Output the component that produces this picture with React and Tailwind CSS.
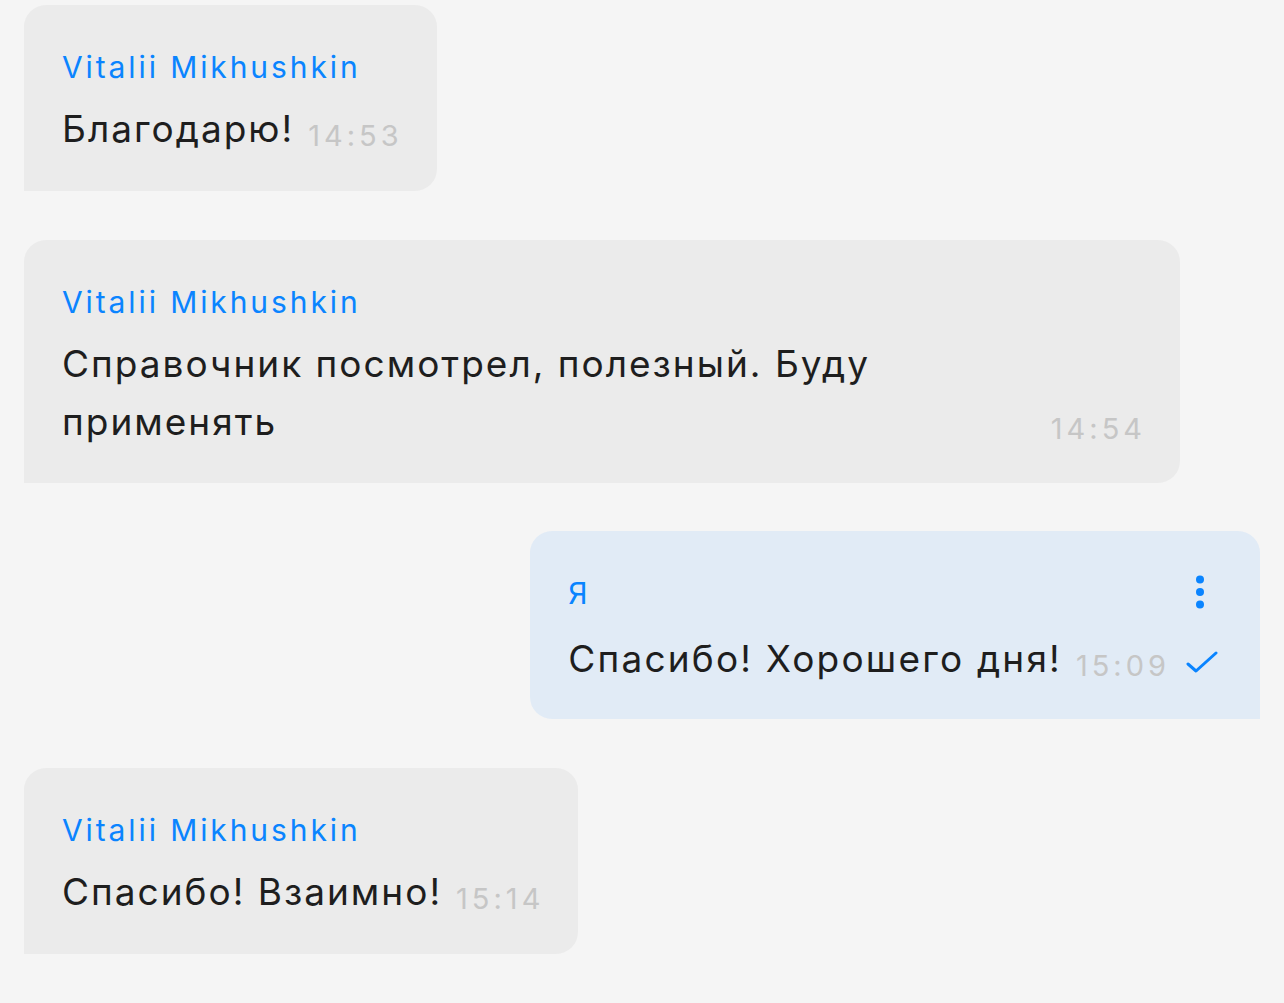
const incoming = [
  { id: 1, name: 'Vitalii Mikhushkin', text: 'Благодарю!', time: '14:53' },
]

function Incoming({ name, time, children, wide }) {
  return (
    <div
      className={`bg-[#ebebeb] rounded-[22px] rounded-bl-none pl-[38px] pr-[38px] pt-[44px] ${
        wide ? 'w-[1156px] pb-[32px]' : 'w-fit pb-[33px]'
      }`}
    >
      <div className="text-[30px] leading-[36px] text-[#0a84ff] tracking-[2.9px]">{name}</div>
      <div className={`mt-[15px] flex items-end gap-[14px] ${wide ? 'justify-between' : ''}`}>
        <div className="text-[37px] leading-[58px] text-[#1e1e1e] tracking-[2px] max-w-[900px]">
          {children}
        </div>
        <span className="text-[29px] leading-[58px] text-[#c6c6c6] tracking-[4px] -mr-[4px] translate-y-[7px] shrink-0">
          {time}
        </span>
      </div>
    </div>
  )
}

export default function App() {
  return (
    <div
      className="min-h-screen bg-[#f5f5f5] px-[24px] pt-[5px] flex flex-col gap-[49px]"
      style={{ fontFamily: 'Inter, "Noto Sans", sans-serif' }}
    >
      {incoming.map((m) => (
        <Incoming key={m.id} name={m.name} time={m.time}>
          {m.text}
        </Incoming>
      ))}

      <Incoming name="Vitalii Mikhushkin" time="14:54" wide>
        Справочник посмотрел, полезный. Буду применять
      </Incoming>

      <div className="self-end -mt-[1px] bg-[#e1ebf6] rounded-[22px] rounded-br-none pl-[38px] pr-[42px] pt-[44px] pb-[31px] w-fit">
        <div className="flex items-center justify-between">
          <div className="text-[30px] leading-[36px] text-[#0a84ff]">Я</div>
          <svg width="10" height="34" viewBox="0 0 10 34" className="mr-[13px] -mt-[2px]" fill="#0a84ff">
            <circle cx="5" cy="4.5" r="4" />
            <circle cx="5" cy="17" r="4" />
            <circle cx="5" cy="29.5" r="4" />
          </svg>
        </div>
        <div className="mt-[19px] flex items-end">
          <div className="text-[37px] leading-[58px] text-[#1e1e1e] tracking-[2.2px]">
            Спасибо! Хорошего дня!
          </div>
          <span className="ml-[14px] text-[29px] leading-[58px] text-[#c6c6c6] tracking-[4px] -mr-[4px] translate-y-[7px]">
            15:09
          </span>
          <svg
            width="32"
            height="24"
            viewBox="0 0 32 24"
            className="ml-[20px] mb-[14px]"
            fill="none"
            stroke="#0a84ff"
            strokeWidth="3"
            strokeLinecap="round"
            strokeLinejoin="round"
          >
            <path d="M2 14 L10 21 L30 3" />
          </svg>
        </div>
      </div>

      <Incoming name="Vitalii Mikhushkin" time="15:14">
        Спасибо! Взаимно!
      </Incoming>
    </div>
  )
}
